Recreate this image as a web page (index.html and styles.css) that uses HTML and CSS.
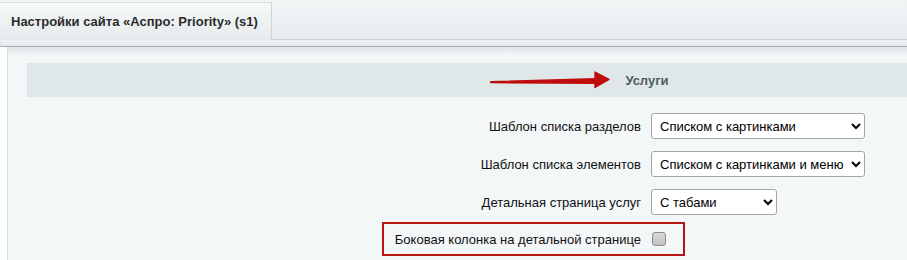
FILE: index.html
```html
<!DOCTYPE html>
<html lang="ru">
<head>
    <meta charset="UTF-8">
    <title>Настройки сайта</title>
    <link rel="stylesheet" href="styles.css">
</head>
<body>
    <div class="tabs">
        <div class="tab">Настройки сайта «Аспро: Priority» (s1)</div>
    </div>
    <div class="tabs-bottom"></div>
    <div class="content">
        <div class="form">
            <div class="heading">
                <span class="heading-text">
                    <svg class="arrow" width="122" height="18" viewBox="0 0 122 18">
                        <path d="M2 11.2 L107 8.2 L107 11.8 Z" fill="#bf0d0d" stroke="#bf0d0d" stroke-width="2.2" stroke-linejoin="round"/>
                        <path d="M106 1 L120 8.4 L106 16.5 Z" fill="#bf0d0d" stroke="#bf0d0d" stroke-width="1.4" stroke-linejoin="round"/>
                    </svg>
                    Услуги
                </span>
            </div>

            <div class="row">
                <label class="cell-label">Шаблон списка разделов</label>
                <div class="cell-field">
                    <select class="sel sel-wide">
                        <option>Списком с картинками</option>
                        <option>Списком с картинками и меню</option>
                    </select>
                </div>
            </div>
            <div class="row">
                <label class="cell-label">Шаблон списка элементов</label>
                <div class="cell-field">
                    <select class="sel sel-wide">
                        <option>Списком с картинками и меню</option>
                        <option>Списком с картинками</option>
                    </select>
                </div>
            </div>
            <div class="row">
                <label class="cell-label">Детальная страница услуг</label>
                <div class="cell-field">
                    <select class="sel sel-short">
                        <option>С табами</option>
                        <option>Без табов</option>
                    </select>
                </div>
            </div>
            <div class="row row-check">
                <label class="cell-label" for="sideCol">Боковая колонка на детальной странице</label>
                <div class="cell-field">
                    <input type="checkbox" id="sideCol" class="check">
                </div>
                <div class="mark"></div>
            </div>
        </div>
    </div>
</body>
</html>
```

FILE: styles.css
```css
html, body{
    margin: 0;
    padding: 0;
    height: 100%;
    overflow: hidden;
    background: #fff;
    font-family: "Liberation Sans", Arial, sans-serif;
    font-size: 13px;
    color: #000;
}

.tabs{
    height: 40px;
    padding-top: 2px;
    box-sizing: border-box;
    background: linear-gradient(#f2f5f6, #e6ecee);
    border-bottom: 1px solid #cdd5d8;
    display: flex;
}
.tab{
    width: 272px;
    box-sizing: border-box;
    padding: 0 0 0 11px;
    display: flex;
    align-items: center;
    background: linear-gradient(#f7f9f9, #e5eaec);
    border-top: 1px solid #d9e0e2;
    border-right: 1px solid #cdd5d8;
    font-weight: bold;
    color: #2b2b2b;
    margin-bottom: -1px;
}

.tabs-bottom{
    height: 6px;
    background: linear-gradient(#eef2f3, #e4eaec);
    border-bottom: 1px solid #a9b4b8;
}

.content{
    margin-left: 7px;
    border-left: 1px solid #d3dcdf;
    height: 220px;
    padding: 16px 0 0 19px;
    box-sizing: border-box;
    background: linear-gradient(#dfe6e8, #f4f7f8 9px, #f4f7f8);
    overflow: hidden;
}

.form{
    width: 1240px;
}

.heading{
    height: 34px;
    background: #e0e7e8;
    display: flex;
    align-items: center;
    justify-content: center;
    margin-bottom: 10px;
    font-weight: bold;
    color: #4b5f66;
}
.heading-text{
    position: relative;
}
.arrow{
    position: absolute;
    right: 100%;
    margin-right: 14px;
    top: -2px;
}

.row{
    display: grid;
    grid-template-columns: 1fr 1fr;
    position: relative;
}
.cell-label{
    padding: 6px 6px 6px 4px;
    display: flex;
    align-items: center;
    justify-content: flex-end;
    height: 26px;
    color: #111;
}
.cell-field{
    padding: 6px 4px;
    display: flex;
    align-items: center;
    height: 26px;
}

.sel{
    height: 26px;
    font-family: "Liberation Sans", Arial, sans-serif;
    font-size: 13px;
    color: #000;
    background: #fff;
    border: 1px solid #a6a6a6;
    border-radius: 3px;
    padding: 0 4px;
}
.sel-wide{
    width: 214px;
}
.sel-short{
    width: 126px;
}

.row-check .cell-label,
.row-check .cell-field{
    padding-top: 7px;
    height: 22px;
}

.check{
    appearance: none;
    -webkit-appearance: none;
    margin: 0 0 0 1px;
    width: 14px;
    height: 14px;
    border: 1px solid #8c8c8c;
    border-radius: 3px;
    background: linear-gradient(#d9d9d9, #c2c2c2);
    box-sizing: border-box;
}

.mark{
    position: absolute;
    left: 355px;
    top: 1px;
    width: 303px;
    height: 34px;
    border: 2px solid #b81414;
    box-sizing: border-box;
    pointer-events: none;
}
```
